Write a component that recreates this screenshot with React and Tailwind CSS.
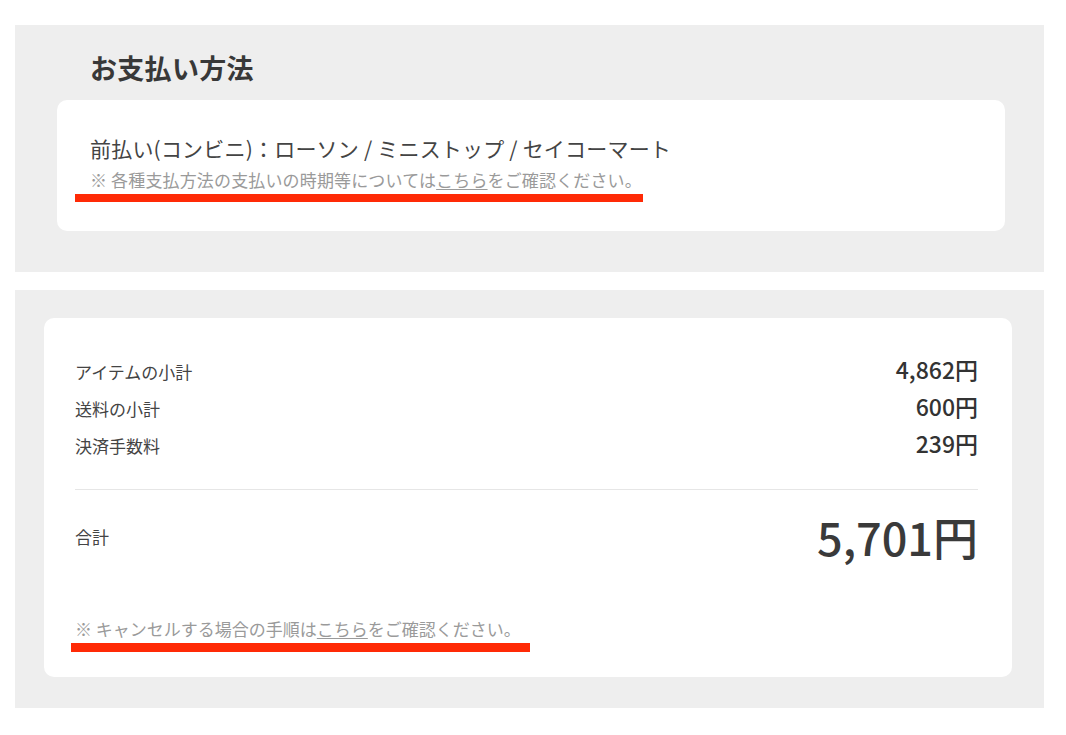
import React from 'react';

// Payment method + order summary block
const rows = [
  { label: 'アイテムの小計', value: '4,862円' },
  { label: '送料の小計', value: '600円' },
  { label: '決済手数料', value: '239円' },
];

const Marker = ({ className }) => (
  <div className={`bg-[#ff2a06] ${className}`} />
);

export default function App() {
  return (
    <div className="w-full h-[735px] bg-white pt-[25px] pl-[15px] pr-[22px] font-['Noto_Sans_CJK_JP',sans-serif]">
      {/* お支払い方法 */}
      <section className="bg-[#eeeeee] h-[247px] pl-[42px] pr-[39px] pt-[24px]">
        <h2 className="pl-[33px] text-[27px] leading-[38px] font-bold tracking-[0.3px] text-[#383838]">
          お支払い方法
        </h2>
        <div className="mt-[13px] h-[131px] bg-white rounded-[10px] pl-[33px] pt-[33px]">
          <p className="text-[21px] leading-[30px] tracking-[0.2px] text-[#444444]">
            前払い(コンビニ)：ローソン / ミニストップ / セイコーマート
          </p>
          <p className="mt-[5px] text-[17px] leading-[24px] tracking-[0.15px] text-[#9a9a9a]">
            ※ 各種支払方法の支払いの時期等については
            <span className="underline underline-offset-2">こちら</span>
            をご確認ください。
          </p>
          <Marker className="mt-[2px] -ml-[15px] w-[568px] h-[8px]" />
        </div>
      </section>

      {/* 金額 */}
      <section className="mt-[18px] bg-[#eeeeee] h-[418px] pl-[29px] pr-[32px] pt-[28px]">
        <div className="h-[359px] bg-white rounded-[10px] pl-[31px] pr-[34px] pt-[33px]">
          <div className="flex flex-col">
            {rows.map((r) => (
              <div key={r.label} className="flex justify-between items-baseline h-[37px] leading-[37px]">
                <span className="text-[17px] text-[#444444]">{r.label}</span>
                <span className="text-[23px] font-medium text-[#333333]">{r.value}</span>
              </div>
            ))}
          </div>

          <div className="mt-[27px] border-t border-[#e6e6e6]" />

          <div className="mt-[19px] flex justify-between items-center h-[56px]">
            <span className="text-[17px] text-[#444444]">合計</span>
            <span className="text-[45px] leading-[56px] font-medium text-[#3a3a3a]">5,701円</span>
          </div>

          <p className="mt-[52px] text-[17px] leading-[24px] text-[#9a9a9a]">
            ※ キャンセルする場合の手順は
            <span className="underline underline-offset-2">こちら</span>
            をご確認ください。
          </p>
          <Marker className="mt-[2px] -ml-[4px] w-[459px] h-[9px]" />
        </div>
      </section>
    </div>
  );
}
